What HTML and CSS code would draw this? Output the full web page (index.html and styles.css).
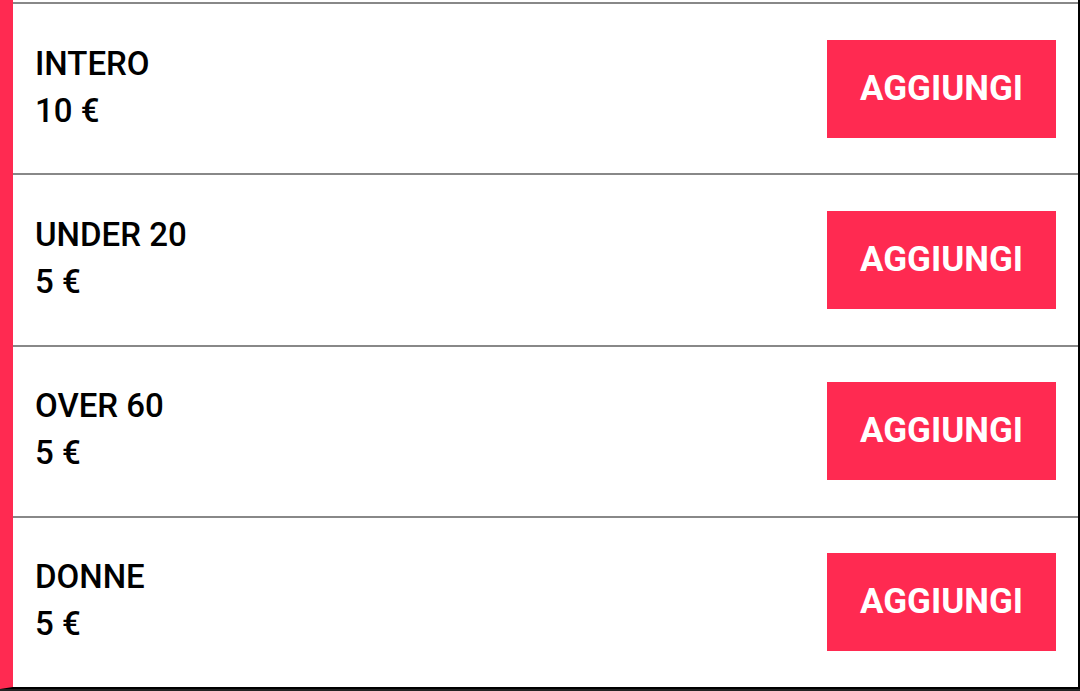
FILE: index.html
```
<!DOCTYPE html>
<html lang="it">
<head>
    <meta charset="UTF-8">
    <meta name="viewport" content="width=device-width, initial-scale=1.0">
    <title>Biglietti</title>
    <link rel="stylesheet" href="styles.css">
</head>
<body>

<main class="tickets">
    <div class="ticket">
        <div class="info">
            <div id="intero">INTERO</div>
            <div>10 €</div>
        </div>
        <button type="button" aria-describedby="intero">AGGIUNGI</button>
    </div>
    <div class="ticket">
        <div class="info">
            <div id="under20">UNDER 20</div>
            <div>5 €</div>
        </div>
        <button type="button" aria-describedby="under20">AGGIUNGI</button>
    </div>
    <div class="ticket">
        <div class="info">
            <div id="over60">OVER 60</div>
            <div>5 €</div>
        </div>
        <button type="button" aria-describedby="over60">AGGIUNGI</button>
    </div>
    <div class="ticket">
        <div class="info">
            <div id="donne">DONNE</div>
            <div>5 €</div>
        </div>
        <button type="button" aria-describedby="donne">AGGIUNGI</button>
    </div>
</main>

</body>
</html>
```
FILE: styles.css
```
body {
    margin: 0;
    background-color: #222222;
    font-family: Roboto, sans-serif;
}

.tickets {
    display: flex;
    flex-direction: column;
    box-sizing: border-box;
    min-height: calc(100vh - 2px);
    padding-top: 2px;
    background-color: #ffffff;
    border-left: 13px solid #ff2a51;
    border-right: 2px solid #000000;
    border-bottom: 2px solid #000000;
}

.ticket {
    display: flex;
    flex: 1;
    justify-content: space-between;
    align-items: center;
    padding: 0 22px;
    border-top: 2px solid #888888;
}

.info {
    padding-bottom: 4px;
    color: #000000;
    font-size: 33px;
    font-weight: 500;
    line-height: 47px;
}

button {
    min-width: 229px;
    padding: 24px 32px;
    border: none;
    background-color: #ff2a51;
    color: #ffffff;
    font-family: Roboto, sans-serif;
    font-size: 35px;
    font-weight: bold;
    line-height: 50px;
    cursor: pointer;
}

button:hover {
    background-color: #e0203f;
}
```
